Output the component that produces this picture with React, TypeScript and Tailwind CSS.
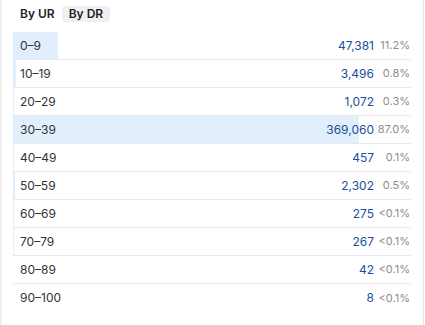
import React from "react";

const rows = [
  { label: "0–9", value: "47,381", pct: "11.2%", p: 11.2 },
  { label: "10–19", value: "3,496", pct: "0.8%", p: 0.8 },
  { label: "20–29", value: "1,072", pct: "0.3%", p: 0.3 },
  { label: "30–39", value: "369,060", pct: "87.0%", p: 87.0 },
  { label: "40–49", value: "457", pct: "0.1%", p: 0.1 },
  { label: "50–59", value: "2,302", pct: "0.5%", p: 0.5 },
  { label: "60–69", value: "275", pct: "<0.1%", p: 0.05 },
  { label: "70–79", value: "267", pct: "<0.1%", p: 0.05 },
  { label: "80–89", value: "42", pct: "<0.1%", p: 0.01 },
  { label: "90–100", value: "8", pct: "<0.1%", p: 0.001 },
];

export default function App() {
  return (
    <div
      className="w-[425px] h-[325px] bg-white overflow-hidden"
      style={{ fontFamily: "Inter, 'Noto Sans', sans-serif" }}
    >
      <div className="w-[424px] h-[325px] border-l-2 border-r border-l-[#efefef] border-r-[#e6e6e6] pl-[11px] pr-[12px]">
        <div className="flex pt-[6px] h-[32px]">
          <div className="px-[7px] h-[16px] leading-[16px] text-[12px] font-semibold text-[#222]">
            By UR
          </div>
          <div className="px-[7px] h-[16px] leading-[16px] text-[12px] font-semibold text-[#222] bg-[#eef0f2] rounded-[3px]">
            By DR
          </div>
        </div>
        <div className="flex flex-col">
          {rows.map((r, i) => (
            <div
              key={r.label}
              className={`relative h-[28px] flex items-center ${
                i < rows.length - 1 ? "border-b border-[#e6e8eb]" : ""
              }`}
            >
              <div
                className="absolute left-0 top-0 bottom-0 bg-[#e1eefb]"
                style={{ width: `${r.p}%` }}
              />
              <div className="relative pl-[7px] text-[12px] text-[#333]">{r.label}</div>
              <div className="relative flex-1 text-right text-[12px] text-[#1b4f9c]">
                {r.value}
              </div>
              <div className="relative w-[37px] pr-[1px] text-right text-[11px] text-[#8d8d8d]">
                {r.pct}
              </div>
            </div>
          ))}
        </div>
      </div>
    </div>
  );
}
